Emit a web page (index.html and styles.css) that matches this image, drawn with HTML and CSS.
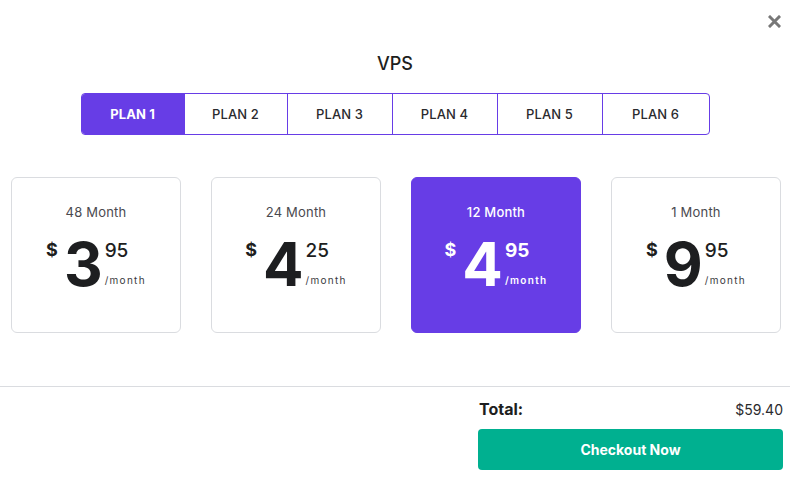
FILE: index.html
```html
<!DOCTYPE html>
<html>
<head>
<meta charset="utf-8">
<link rel="stylesheet" href="styles.css">
</head>
<body>
<div class="modal">
  <button class="close" aria-label="Close">
    <svg width="13" height="13" viewBox="0 0 13 13"><path d="M2 2 L11 11 M11 2 L2 11" stroke="#777" stroke-width="3" stroke-linecap="square"/></svg>
  </button>
  <h1 class="title">VPS</h1>
  <div class="tabs">
    <div class="tab active">PLAN 1</div>
    <div class="tab">PLAN 2</div>
    <div class="tab">PLAN 3</div>
    <div class="tab">PLAN 4</div>
    <div class="tab">PLAN 5</div>
    <div class="tab">PLAN 6</div>
  </div>
  <div class="cards">
    <div class="card">
      <div class="period">48 Month</div>
      <div class="price"><span class="cur">$</span><span class="big">3</span><span class="side"><span class="cents">95</span><span class="per">/month</span></span></div>
    </div>
    <div class="card">
      <div class="period">24 Month</div>
      <div class="price"><span class="cur">$</span><span class="big">4</span><span class="side"><span class="cents">25</span><span class="per">/month</span></span></div>
    </div>
    <div class="card selected">
      <div class="period">12 Month</div>
      <div class="price"><span class="cur">$</span><span class="big">4</span><span class="side"><span class="cents">95</span><span class="per">/month</span></span></div>
    </div>
    <div class="card">
      <div class="period">1 Month</div>
      <div class="price"><span class="cur">$</span><span class="big">9</span><span class="side"><span class="cents">95</span><span class="per">/month</span></span></div>
    </div>
  </div>
  <hr class="divider">
  <div class="footer">
    <div class="summary">
      <div class="total-row"><span class="total-label">Total:</span><span class="total-value">$59.40</span></div>
      <button class="checkout">Checkout Now</button>
    </div>
  </div>
</div>
</body>
</html>
```
FILE: styles.css
```css
* { box-sizing: border-box; }
html, body { margin: 0; padding: 0; background: #fff; }
body { font-family: Inter, "Noto Sans", sans-serif; color: #1d1e20; width: 790px; height: 485px; overflow: hidden; }
.modal { position: relative; padding-top: 52px; }
.close { position: absolute; top: 15px; right: 9px; width: 13px; height: 13px; padding: 0; border: 0; background: none; display: flex; }
.title { margin: 0; font-size: 18px; line-height: 24px; font-weight: 500; text-align: center; color: #1d1e20; }
.tabs { display: flex; width: 629px; height: 42px; margin: 17px auto 0; border: 1px solid #673de6; border-radius: 4px; overflow: hidden; }
.tab { flex: 103 1 0; display: flex; align-items: center; justify-content: center; font-size: 13px; font-weight: 500; color: #2a2a2e; border-left: 1px solid #673de6; letter-spacing: 0.1px; }
.tab:nth-child(n+3) { flex-grow: 105; }
.tab:last-child { flex-grow: 107; }
.tab:first-child { border-left: 0; }
.tab.active { background: #673de6; color: #fff; font-weight: 700; }
.cards { display: flex; gap: 30px; margin: 42px 9px 0 11px; }
.card { width: 170px; height: 156px; border: 1px solid #dadce0; border-radius: 6px; padding-top: 26px; display: flex; flex-direction: column; align-items: center; }
.period { font-size: 13px; line-height: 16px; color: #4a4a4f; letter-spacing: 0.2px; }
.price { display: flex; align-items: flex-start; margin-top: 14px; height: 60px; }
.cur { font-size: 18px; line-height: 18px; font-weight: 700; margin-top: 7px; margin-right: 6px; }
.big { font-size: 60px; line-height: 60px; font-weight: 700; letter-spacing: -1px; }
.side { display: flex; flex-direction: column; margin-left: 3px; }
.cents { font-size: 19px; line-height: 19px; font-weight: 500; margin-top: 7px; }
.per { font-size: 10px; line-height: 12px; letter-spacing: 1.3px; margin-top: 14px; color: #3a3a3e; }
.card.selected { background: #673de6; border-color: #673de6; color: #fff; }
.card.selected .period { color: #fff; font-weight: 500; }
.card.selected .cents { font-weight: 700; }
.card.selected .per { color: #fff; font-weight: 600; }
.divider { margin: 53px 0 0; border: 0; border-top: 1px solid #dadce0; height: 0; }
.footer { display: flex; justify-content: flex-end; padding-right: 7px; margin-top: 12px; }
.summary { width: 305px; display: flex; flex-direction: column; }
.total-row { display: flex; justify-content: space-between; align-items: center; height: 20px; padding-left: 1px; }
.total-label { font-size: 16px; font-weight: 700; }
.total-value { font-size: 14px; color: #2a2a2e; }
.checkout { margin-top: 10px; height: 41px; border: 0; border-radius: 4px; background: #00b090; color: #fff; font-family: inherit; font-size: 14px; font-weight: 700; }
```
